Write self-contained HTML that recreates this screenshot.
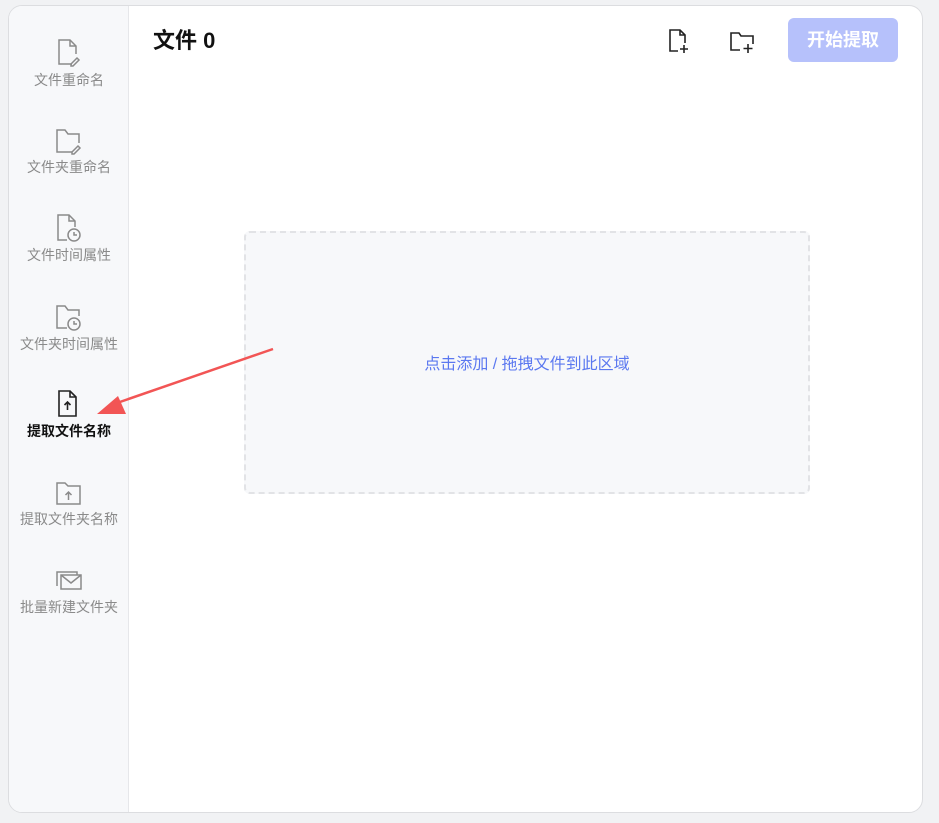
<!DOCTYPE html>
<html><head><meta charset="utf-8"><style>
*{margin:0;padding:0;box-sizing:border-box}
body{width:939px;height:823px;background:#f1f2f4;position:relative;overflow:hidden;font-family:"Liberation Sans","Noto Sans CJK SC",sans-serif}
.card{position:absolute;left:8px;top:5px;width:915px;height:808px;background:#fff;border:1px solid #dcdde0;border-radius:14px;overflow:hidden}
.side{position:absolute;left:0;top:0;width:120px;height:100%;background:#f7f8fa;border-right:1px solid #e6e7ea}
.item{position:absolute;left:0;width:120px;text-align:center;font-size:14px;color:#8a8a8a}
.item svg{display:block;margin:0 auto 2px}
.item.act{color:#111;font-weight:bold}
.title{position:absolute;left:144px;top:17px;font-size:22px;font-weight:bold;color:#111}
.btn{position:absolute;left:779px;top:12px;width:110px;height:44px;background:#b6c1fb;border-radius:6px;color:#fff;font-size:18px;font-weight:bold;text-align:center;line-height:44px}
.drop{position:absolute;left:235px;top:225px;width:566px;height:263px;background:#f7f8fa;border:2px dashed #e2e3e6;border-radius:6px;text-align:center;line-height:263px;color:#5b78f0;font-size:16px}
</style></head><body>
<div class="card">
 <div class="side">
  <div class="item" style="top:32px"><svg width="26" height="30" viewBox="0 0 26 30" fill="none" stroke="#8a8a8a" stroke-width="1.5"><path d="M16 26H3V2h11l6 6v8"/><path d="M14 2v6h6"/><path d="M15 26l6-6 2 2-6 6h-2z"/></svg>文件重命名</div>
  <div class="item" style="top:121px"><svg width="28" height="28" viewBox="0 0 28 28" fill="none" stroke="#8a8a8a" stroke-width="1.5"><path d="M17 25H2V3h8l3 4h11v9"/><path d="M17 25l6-6 2 2-6 6h-2z"/></svg>文件夹重命名</div>
  <div class="item" style="top:207px"><svg width="28" height="30" viewBox="0 0 28 30" fill="none" stroke="#8a8a8a" stroke-width="1.5"><path d="M12 27H3V2h11l6 6v6"/><path d="M14 2v6h6"/><circle cx="19" cy="22" r="6"/><path d="M19 19v3h3"/></svg>文件时间属性</div>
  <div class="item" style="top:296px"><svg width="28" height="30" viewBox="0 0 28 30" fill="none" stroke="#8a8a8a" stroke-width="1.5"><path d="M12 26H2V4h8l3 4h11v6"/><circle cx="19" cy="22" r="6"/><path d="M19 19v3h3"/></svg>文件夹时间属性</div>
  <div class="item act" style="top:383px"><svg width="26" height="30" viewBox="0 0 26 30" fill="none" stroke="#222" stroke-width="1.6"><path d="M3 2h11l6 6v19H3z"/><path d="M14 2v6h6"/><path d="M11.5 21v-8M8.5 16l3-3 3 3"/></svg>提取文件名称</div>
  <div class="item" style="top:473px"><svg width="28" height="28" viewBox="0 0 28 28" fill="none" stroke="#8a8a8a" stroke-width="1.5"><path d="M2 4h8l3 3h12v18H2z"/><path d="M13.5 21v-8M10.5 16l3-3 3 3"/></svg>提取文件夹名称</div>
  <div class="item" style="top:561px"><svg width="30" height="28" viewBox="0 0 30 28" fill="none" stroke="#8a8a8a" stroke-width="1.5"><path d="M3 19V5h20v3"/><rect x="7" y="8" width="20" height="14"/><path d="M7 8l10 8 10-8"/></svg>批量新建文件夹</div>
 </div>
 <div class="title">文件 0</div>
 <svg style="position:absolute;left:656px;top:21px" width="28" height="28" viewBox="0 0 28 28" fill="none" stroke="#222" stroke-width="1.6"><path d="M13 24H5V3h10l5 5v8"/><path d="M15 3v5h5"/><path d="M19 18v8M15 22h8"/></svg>
 <svg style="position:absolute;left:718px;top:21px" width="30" height="28" viewBox="0 0 30 28" fill="none" stroke="#222" stroke-width="1.6"><path d="M13 23H4V6h8l2 3h12v8"/><path d="M21 17v9M16.5 21.5h9"/></svg>
 <div class="btn">开始提取</div>
 <div class="drop">点击添加 / 拖拽文件到此区域</div>
</div>
<svg style="position:absolute;left:0;top:0" width="939" height="823"><path d="M273 349L114 404" stroke="#f25555" stroke-width="2.5"/><polygon points="97,414 118,396 126,414" fill="#f25555"/></svg>
</body></html>
